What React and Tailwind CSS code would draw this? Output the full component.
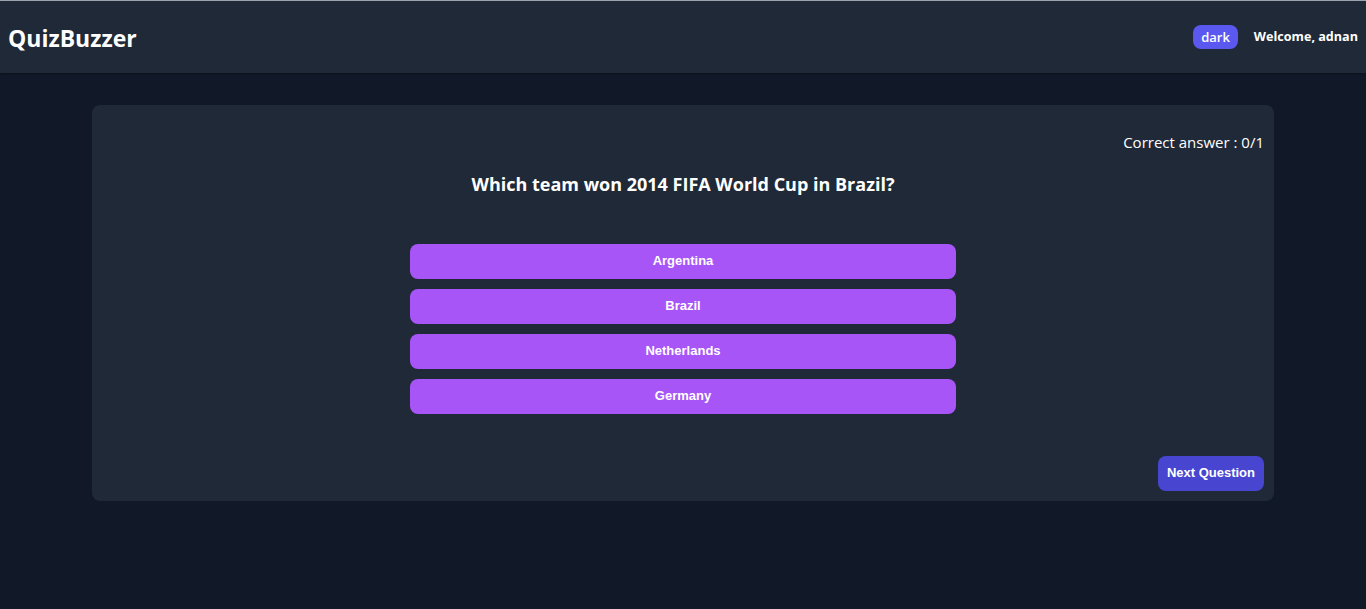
const answers = ["Argentina", "Brazil", "Netherlands", "Germany"];

const App = () => {
  return (
    <div className="min-h-screen bg-[#111827] text-white font-['Open_Sans',sans-serif]">
      <header className="h-[73px] bg-[#1f2937] border-t border-[#9ca3af] flex items-center justify-between pl-2 pr-2 shadow-[0_1px_2px_rgba(0,0,0,0.3)]">
        <h1 className="text-[23px] font-bold mt-[2px]">QuizBuzzer</h1>
        <div className="flex items-center gap-4">
          <span className="bg-[#5b58ef] text-[13px] font-semibold leading-[24px] px-[8px] rounded-lg">dark</span>
          <span className="text-[12.6px] font-bold">Welcome, adnan</span>
        </div>
      </header>

      <div className="w-[1182px] mx-auto mt-8 bg-[#1f2937] rounded-lg px-[10px] pt-[26px] pb-[10px]">
        <p className="text-right text-[15px]">Correct answer : 0/1</p>
        <h2 className="text-center text-[18px] font-bold mt-[17px]">Which team won 2014 FIFA World Cup in Brazil?</h2>

        <div className="w-[546px] mx-auto mt-[46px] flex flex-col gap-[10px] font-['Liberation_Sans',Arial,sans-serif]">
          {answers.map((a) => (
            <button key={a} className="h-[35px] bg-[#a855f7] rounded-lg text-[13px] font-bold text-white">
              {a}
            </button>
          ))}
        </div>

        <div className="flex justify-end mt-[42px]">
          <button className="h-[35px] px-[9px] bg-[#4846d1] rounded-lg text-[13px] font-bold font-['Liberation_Sans',Arial,sans-serif]">
            Next Question
          </button>
        </div>
      </div>
    </div>
  );
};

export default App;
